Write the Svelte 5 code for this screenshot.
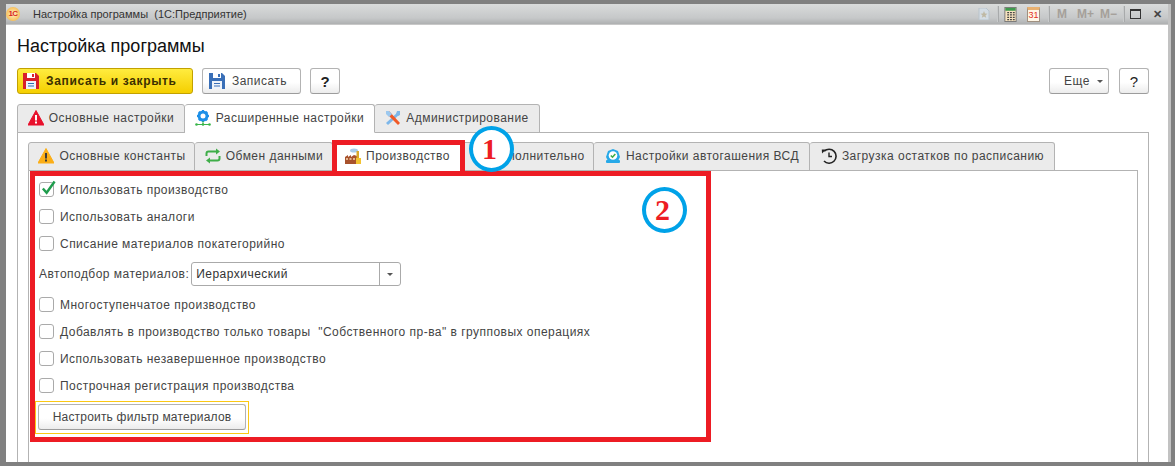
<script>
	const mainTabs = [
		{ label: 'Основные настройки', icon: 'warnRed', width: 168 },
		{ label: 'Расширенные настройки', icon: 'gear', width: 190, active: true },
		{ label: 'Администрирование', icon: 'tools', width: 165 }
	];
	const subTabs = [
		{ label: 'Основные константы', icon: 'warnOrange', width: 167 },
		{ label: 'Обмен данными', icon: 'sync', width: 138 },
		{ label: 'Производство', icon: 'factory', width: 129, active: true },
		{ label: 'Дополнительно', icon: 'extra', width: 132 },
		{ label: 'Настройки автогашения ВСД', icon: 'badge', width: 216 },
		{ label: 'Загрузка остатков по расписанию', icon: 'clock', width: 245 }
	];
	const topOptions = [
		{ label: 'Использовать производство', checked: true },
		{ label: 'Использовать аналоги' },
		{ label: 'Списание материалов покатегорийно' }
	];
	const bottomOptions = [
		{ label: 'Многоступенчатое производство' },
		{ label: 'Добавлять в производство только товары  "Собственного пр-ва" в групповых операциях' },
		{ label: 'Использовать незавершенное производство' },
		{ label: 'Построчная регистрация производства' }
	];
</script>

{#snippet floppy(body, label)}
	<svg class="ico" viewBox="0 0 16 16">
		<path d="M0 0h13l3 3v13H0z" fill={body} />
		<rect x="4" y="0" width="8" height="5" fill="#fff" />
		<rect x="9" y="1" width="2" height="3" fill={body} />
		<rect x="3" y="8" width="10" height="8" fill="#eef3fa" />
		<path d="M5 10.5h6M5 13h6" stroke={label} stroke-width="1" />
	</svg>
{/snippet}

{#snippet icon(name)}
	<svg class="ico" viewBox="0 0 16 16">
		{#if name === 'warnRed'}
			<path d="M8 .5 16 15H0z" fill="#e8112d" stroke="#e8112d" stroke-linejoin="round" />
			<rect x="7" y="5" width="2" height="5.5" fill="#fff" />
			<rect x="7" y="11.5" width="2" height="2" fill="#fff" />
		{:else if name === 'warnOrange'}
			<path d="M8 .5 16 15H0z" fill="#fbae17" stroke="#fbae17" stroke-linejoin="round" />
			<rect x="7" y="5" width="2" height="5.5" fill="#3a3a3a" />
			<rect x="7" y="11.5" width="2" height="2" fill="#3a3a3a" />
		{:else if name === 'gear'}
			<circle cx="8" cy="6" r="4" fill="none" stroke="#1e90e8" stroke-width="3" />
			<path d="M8 0v2M8 10v2M2 6h2M12 6h2M3.800 1.800l1.400 1.400M10.800 8.800l1.400 1.400M3.800 10.200l1.400-1.400M10.800 3.200l1.400-1.400" stroke="#1e90e8" stroke-width="2" />
			<path d="M1 14.500h14M8 11v3.500" stroke="#39b54a" stroke-width="1" />
			<circle cx="1.500" cy="14.500" r="1.300" fill="#39b54a" />
			<circle cx="8" cy="14.500" r="1.300" fill="#39b54a" />
			<circle cx="14.500" cy="14.500" r="1.300" fill="#39b54a" />
		{:else if name === 'tools'}
			<path d="M2 14 14 3" stroke="#7db7ea" stroke-width="3" />
			<path d="M1 1l3 0 11 12-2 2L2 4z" fill="#f05a28" />
			<path d="M1 1l3 0 3 3-3 3-3-3z" fill="#9cc8ee" />
			<path d="M15 1l-3 0-1 3 2 2 2-1z" fill="#7db7ea" />
		{:else if name === 'sync'}
			<path d="M1.500 8V5.500Q1.500 3.500 3.500 3.500H12" fill="none" stroke="#3fae49" stroke-width="2" />
			<path d="M11 0.500 15 3.500 11 6.500z" fill="#3fae49" />
			<path d="M14.500 8v2.500Q14.500 12.500 12.500 12.500H4" fill="none" stroke="#3fae49" stroke-width="2" />
			<path d="M5 9.500 1 12.500 5 15.500z" fill="#3fae49" />
		{:else if name === 'factory'}
			<ellipse cx="9" cy="2.500" rx="4" ry="2" fill="#a9cdea" />
			<path d="M0 9 3 7v2l3-2v2l3-2 3 1v8H0z" fill="#a8522c" />
			<path d="M1 11h2M4.500 11h2M8 11h2" stroke="#f3d7b0" stroke-width="1.500" />
			<rect x="11.500" y="3" width="2.500" height="8" fill="#d9a92a" />
			<rect x="11" y="10" width="5" height="6" fill="#f2c230" />
		{:else if name === 'extra'}
			<circle cx="8" cy="8" r="6" fill="#a9d8f2" />
		{:else if name === 'badge'}
			<path d="M3 3 8 1l5 2 2 6-2 4H3L1 9z" fill="#27a9e8" />
			<rect x="1" y="12" width="14" height="3" rx="1" fill="#27a9e8" />
			<circle cx="8" cy="7.500" r="4.300" fill="#fff" />
			<path d="M5.800 7.500l1.700 1.700 2.800-3.200" fill="none" stroke="#3fae49" stroke-width="1.600" />
		{:else}
			<path d="M3.200 3.200A7 7 0 1 1 3 13" fill="none" stroke="#222" stroke-width="1.600" />
			<path d="M0.800 1.500 5 1.500 1 5.500z" fill="#222" />
			<path d="M8 4.500V8.500H11" fill="none" stroke="#222" stroke-width="1.400" />
		{/if}
	</svg>
{/snippet}

{#snippet option(item)}
	<label class="option">
		<span class="box">
			{#if item.checked}
				<svg class="tick" viewBox="0 0 16 16"><path d="M2 8.500 6 13 14.500 1" fill="none" stroke="#1f9d4d" stroke-width="2.600" /></svg>
			{/if}
		</span>
		<span>{item.label}</span>
	</label>
{/snippet}

<div class="window">
	<header class="titlebar">
		<span class="logo">1C</span>
		<span class="wintitle">Настройка программы  (1С:Предприятие)</span>
		<div class="winicons">
			<svg class="wi" viewBox="0 0 12 12"><path d="M1 0h7l3 3v9H1z" fill="#d4dde4" stroke="#b9c4cc" /><path d="M6 3l1 2.500 2.500.2-2 1.600.7 2.500L6 8.400 3.800 9.800l.7-2.500-2-1.600 2.500-.2z" fill="#bfb9a4" /></svg>
			<span class="sep"></span>
			<svg class="cal" viewBox="0 0 13 16"><rect x=".5" y=".5" width="12" height="15" fill="#f7e3bf" stroke="#777" /><rect x="1" y="1" width="11" height="3" fill="#3f9a4e" /><path d="M3 6h2M6 6h2M9 6h2M3 8.500h2M6 8.500h2M9 8.500h2M3 11h2M6 11h2M9 11h2M3 13.500h2M6 13.500h2M9 13.500h2" stroke="#444" stroke-width="1.300" /></svg>
			<span class="date">31</span>
			<span class="sep mid"></span>
			<span class="mem">M</span>
			<span class="mem plus">M+</span>
			<span class="mem plus">M−</span>
			<span class="sep end"></span>
			<span class="maxbox"></span>
			<span class="close">✕</span>
		</div>
	</header>

	<main class="content">
		<h1>Настройка программы</h1>

		<div class="toolbar">
			<button class="btn primary">{@render floppy('#d81f2a', '#2d6fb5')}Записать и закрыть</button>
			<button class="btn save">{@render floppy('#3a6fb7', '#3a6fb7')}Записать</button>
			<button class="btn help strong">?</button>
			<div class="spring"></div>
			<button class="btn more">Еще <i class="caret"></i></button>
			<button class="btn help">?</button>
		</div>

		<div class="tabs">
			{#each mainTabs as tab}
				<div class="tab" class:active={tab.active} style="width: {tab.width}px">{@render icon(tab.icon)}{tab.label}</div>
			{/each}
		</div>
		<section class="panel outer">
			<div class="tabs">
				{#each subTabs as tab}
					<div class="tab" class:active={tab.active} style="width: {tab.width}px">{@render icon(tab.icon)}{tab.label}</div>
				{/each}
			</div>
			<section class="panel inner">
				{#each topOptions as item}
					{@render option(item)}
				{/each}
				<div class="field">
					<span>Автоподбор материалов:</span>
					<div class="select"><span class="value">Иерархический</span><span class="arrow"><i class="caret"></i></span></div>
				</div>
				{#each bottomOptions as item}
					{@render option(item)}
				{/each}
				<div class="focus"><button class="btn filter">Настроить фильтр материалов</button></div>
			</section>
		</section>
	</main>

	<div class="mark tabmark"></div>
	<div class="mark areamark"></div>
	<div class="num one">1</div>
	<div class="num two">2</div>
</div>

<style>
	:global(body) {
		background: #808080;
	}

	.window {
		position: relative;
		box-sizing: border-box;
		width: 1165px;
		height: 458px;
		margin: 4px 0 0 6px;
		background: #fff;
		border-right: 3px solid #c2c2c2;
		display: flex;
		flex-direction: column;
		overflow: hidden;
		font-family: 'Liberation Sans', Arial, sans-serif;
		font-size: 12px;
		letter-spacing: 0.47px;
		color: #444;
	}

	.titlebar {
		flex: none;
		height: 20px;
		margin-right: -3px;
		display: flex;
		align-items: center;
		background: linear-gradient(#d9dbdb, #c6c8c9 70%, #aeb0b1);
		color: #333;
		font-size: 11px;
		letter-spacing: 0.02px;
		white-space: pre;
	}

	.logo {
		width: 14px;
		height: 14px;
		margin-right: 13px;
		border-radius: 50%;
		background: radial-gradient(#fff3c4, #f3a92e);
		color: #d8261c;
		font-size: 8px;
		font-weight: bold;
		letter-spacing: -0.5px;
		line-height: 14px;
		text-align: center;
	}

	.winicons {
		margin-left: auto;
		width: 193px;
		display: flex;
		align-items: center;
	}

	.wi {
		width: 12px;
		height: 12px;
	}

	.sep {
		width: 1px;
		height: 16px;
		margin: 0 5px 0 7px;
		background: #c9cbcc;
		border-right: 1px solid #a8aaab;
	}

	.sep.mid {
		margin: 0 7px 0 8px;
	}

	.sep.end {
		margin: 0 5px 0 0;
	}

	.cal {
		width: 13px;
		height: 15px;
		margin-right: 10px;
	}

	.date {
		box-sizing: border-box;
		width: 13px;
		height: 15px;
		border: 1px solid #a09080;
		border-top: 3px solid #e8b070;
		background: #fff6e6;
		color: #e0301e;
		font-size: 9px;
		letter-spacing: 0;
		line-height: 11px;
		text-align: center;
	}

	.mem {
		width: 20px;
		color: #a5a09a;
		font-weight: bold;
		font-size: 12px;
		letter-spacing: 0;
	}

	.mem.plus {
		width: 23px;
	}

	.maxbox {
		box-sizing: border-box;
		width: 11px;
		height: 10px;
		margin-right: 12px;
		border: 1px solid #333;
		border-top-width: 2px;
	}

	.close {
		color: #444;
		font-size: 11px;
		font-weight: bold;
		letter-spacing: 0;
	}

	.content {
		flex: 1;
		min-height: 0;
		display: flex;
		flex-direction: column;
		padding: 0 19px 0 11px;
		border-top: 1px solid #c8c8c8;
	}

	h1 {
		height: 43px;
		margin: 0;
		font-size: 18px;
		font-weight: normal;
		letter-spacing: 0;
		line-height: 42px;
		color: #111;
	}

	.toolbar {
		flex: none;
		height: 26px;
		display: flex;
		align-items: stretch;
		margin-bottom: 10px;
	}

	.spring {
		flex: 1;
	}

	.btn {
		box-sizing: border-box;
		display: flex;
		align-items: center;
		justify-content: center;
		padding: 0;
		border: 1px solid #b3b3b3;
		border-bottom-color: #9c9c9c;
		border-radius: 3px;
		background: linear-gradient(#fff 55%, #ececec);
		font: inherit;
		letter-spacing: inherit;
		color: #444;
	}

	.primary {
		width: 176px;
		margin-right: 9px;
		padding-left: 5px;
		justify-content: flex-start;
		background: linear-gradient(#ffec3f, #f5cf00);
		border-color: #c2a100;
		color: #3c3000;
		font-weight: bold;
		letter-spacing: 0.65px;
		gap: 7px;
	}

	.save {
		width: 99px;
		margin-right: 9px;
		padding-left: 6px;
		justify-content: flex-start;
		gap: 7px;
	}

	.help {
		width: 30px;
		font-size: 15px;
		color: #222;
		letter-spacing: 0;
	}

	.strong {
		font-weight: bold;
	}

	.more {
		width: 60px;
		margin-right: 10px;
		padding-left: 14px;
		justify-content: flex-start;
		gap: 7px;
	}

	.caret {
		width: 0;
		height: 0;
		border: 3px solid transparent;
		border-top: 3px solid #555;
		border-bottom: 0;
	}

	.ico {
		flex: none;
		width: 16px;
		height: 16px;
	}

	.tabs {
		flex: none;
		height: 28px;
		display: flex;
		position: relative;
		z-index: 1;
	}

	.tab {
		box-sizing: border-box;
		height: 29px;
		padding: 0 0 1px 0;
		display: flex;
		align-items: center;
		justify-content: center;
		gap: 5px;
		white-space: nowrap;
		background: #ebebeb;
		border: 1px solid #b3b3b3;
		border-left-width: 0;
		border-radius: 3px 3px 0 0;
	}

	.outer .tab {
		padding-left: 1px;
	}

	.tab:first-child {
		border-left-width: 1px;
	}

	.tab.active {
		background: #fff;
		border-bottom-color: #fff;
	}

	.panel {
		box-sizing: border-box;
		flex: 1;
		min-height: 0;
		display: flex;
		flex-direction: column;
		border: 1px solid #b3b3b3;
		border-bottom: 0;
	}

	.outer {
		width: 1132px;
		padding: 9px 10px 0;
	}

	.inner {
		padding: 5px 0 0 10px;
		overflow: hidden;
	}

	.option {
		flex: none;
		height: 27px;
		display: flex;
		align-items: center;
		gap: 6px;
		white-space: pre;
	}

	.box {
		position: relative;
		box-sizing: border-box;
		flex: none;
		width: 15px;
		height: 15px;
		border: 1px solid #aaa;
		border-radius: 3px;
		background: #fff;
	}

	.tick {
		position: absolute;
		left: 1px;
		top: -3px;
		width: 15px;
		height: 16px;
	}

	.field {
		flex: none;
		height: 34px;
		display: flex;
		align-items: center;
		gap: 3px;
	}

	.select {
		box-sizing: border-box;
		width: 210px;
		height: 24px;
		display: flex;
		align-items: center;
		border: 1px solid #aaa;
		border-radius: 3px;
		margin-left: -1px;
	}

	.value {
		flex: 1;
		padding-left: 4px;
		color: #333;
	}

	.arrow {
		box-sizing: border-box;
		width: 21px;
		height: 22px;
		display: flex;
		align-items: center;
		justify-content: center;
		border-left: 1px solid #aaa;
	}

	.focus {
		box-sizing: border-box;
		width: 214px;
		height: 33px;
		margin: 2px 0 0 -4px;
		padding: 2px 2px 3px;
		border: 1px solid #fbc814;
	}

	.filter {
		width: 100%;
		height: 100%;
		letter-spacing: 0.2px;
	}

	/* annotations drawn over the screenshot */
	.mark {
		position: absolute;
		box-sizing: border-box;
		z-index: 3;
		border: 5px solid #ed1c24;
		pointer-events: none;
	}

	.tabmark {
		left: 326px;
		top: 136px;
		width: 133px;
		height: 36px;
	}

	.areamark {
		left: 24px;
		top: 167px;
		width: 681px;
		height: 271px;
	}

	.num {
		position: absolute;
		z-index: 4;
		box-sizing: border-box;
		width: 45px;
		height: 46px;
		padding-right: 4px;
		border: 4px solid #00a2e8;
		border-radius: 50%;
		background: #fff;
		color: #ed1c24;
		font-family: 'Liberation Serif', serif;
		font-size: 30px;
		font-weight: bold;
		letter-spacing: 0;
		line-height: 38px;
		text-align: center;
	}

	.one {
		left: 463px;
		top: 122px;
	}

	.two {
		left: 636px;
		top: 183px;
	}
</style>
